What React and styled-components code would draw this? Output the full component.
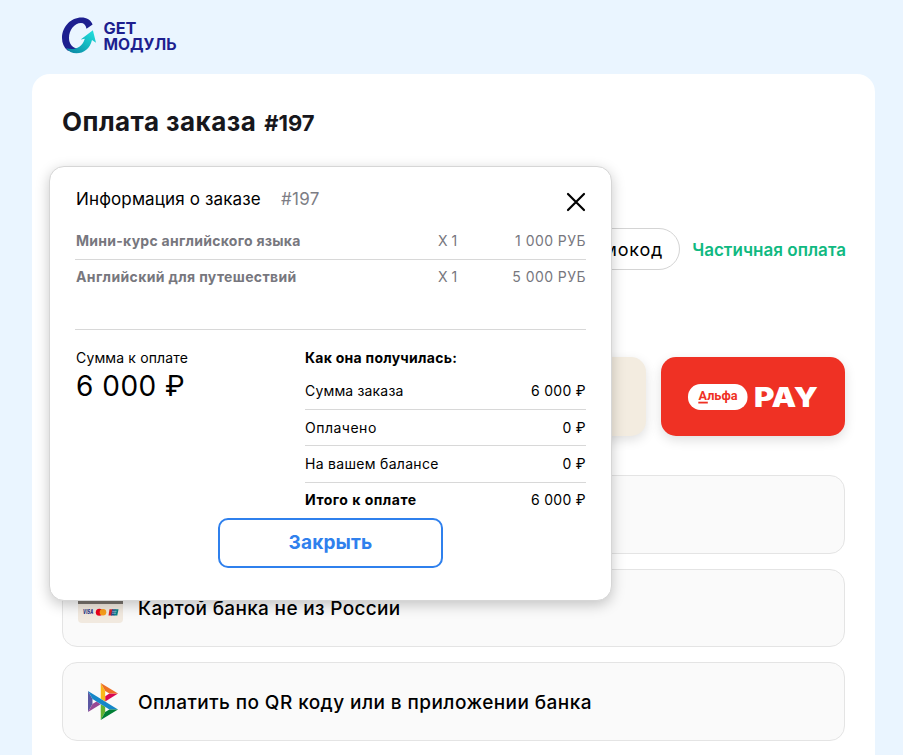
import React from "react";
import styled, { createGlobalStyle } from "styled-components";

const GlobalStyle = createGlobalStyle`
    *, *::before, *::after {
        box-sizing: border-box;
    }

    body {
        margin: 0;
        background: #eaf5ff;
        font-family: Inter, "Open Sans", sans-serif;
        color: #000;
    }
`;

const Page = styled.div`
    position: relative;
    height: 755px;
    padding: 0 28px 0 32px;
    overflow: hidden;
    background: #eaf5ff;
`;

const Header = styled.header`
    display: flex;
    height: 74px;
    padding: 15px 0 0 30px;
`;

const Card = styled.main`
    height: 800px;
    padding: 0 30px;
    border-radius: 18px;
    background: #fff;
`;

const Title = styled.h1`
    display: flex;
    align-items: baseline;
    gap: 8px;
    height: 154px;
    margin: 0;
    padding-top: 31px;
    font-size: 26px;
    line-height: 34px;
    font-weight: 700;
    letter-spacing: 0.45px;
    color: #17171c;
`;

const OrderNumber = styled.span`
    font-size: 22px;
    letter-spacing: 0;
`;

const Actions = styled.div`
    display: flex;
    justify-content: flex-end;
    align-items: center;
    gap: 12px;
    height: 42px;
`;

const PromoButton = styled.button`
    height: 42px;
    padding: 0 16px;
    border: 1px solid #d4d4d4;
    border-radius: 21px;
    background: #fff;
    font: 400 18px Inter, sans-serif;
    letter-spacing: 0.8px;
    color: #000;
`;

const PartialLink = styled.a`
    margin-right: -1px;
    padding-top: 1px;
    font-size: 17px;
    font-weight: 600;
    letter-spacing: 0.03px;
    color: #10b981;
    white-space: nowrap;
`;

const Tiles = styled.div`
    display: grid;
    grid-template-columns: repeat(4, 1fr);
    gap: 15px;
    margin-top: 87px;
`;

const Tile = styled.div`
    display: flex;
    align-items: center;
    justify-content: center;
    height: 79px;
    border-radius: 15px;
    background: ${({ $red }) => ($red ? "#ef3124" : "#f3ece0")};
    box-shadow: 0 4px 12px rgba(0, 0, 0, 0.13);
`;

const Options = styled.div`
    display: flex;
    flex-direction: column;
    gap: 15px;
    margin-top: 39px;
`;

const Option = styled.div`
    display: flex;
    align-items: center;
    gap: 15px;
    height: 78.5px;
    padding: 0 15px;
    border: 1px solid #e4e4e4;
    border-radius: 15px;
    background: #fafafa;
    font-size: 19px;
    font-weight: 500;
    letter-spacing: ${({ $track }) => $track || 0}px;
`;

const OptionIcon = styled.span`
    display: flex;
    justify-content: center;
    flex: 0 0 45px;
`;

const OptionLabel = styled.span`
    padding-top: 2px;
`;

const Modal = styled.section`
    position: absolute;
    left: 49px;
    top: 166px;
    width: 563px;
    height: 435px;
    padding: 0 25px;
    border: 1px solid #d6d6d6;
    border-radius: 15px;
    background: #fff;
    box-shadow: 0 4px 14px rgba(0, 0, 0, 0.22);
`;

const ModalHeader = styled.div`
    display: flex;
    align-items: center;
    height: 56px;
    padding: 8px 0 0 1px;
    font-size: 17px;
    letter-spacing: 0.14px;
`;

const ModalNumber = styled.span`
    margin-left: 20px;
    letter-spacing: 0.3px;
    color: #7d7d85;
`;

const CloseButton = styled.button`
    display: flex;
    margin: 6px 0 0 auto;
    padding: 0;
    border: 0;
    background: none;
`;

const Items = styled.div`
    height: 107px;
    border-bottom: 1px solid #d8d8d8;
`;

const ItemRow = styled.div`
    display: grid;
    grid-template-columns: 1fr 22px 126px;
    align-items: center;
    height: ${({ $last }) => ($last ? 35 : 37)}px;
    padding: 0 0 2px 1px;
    border-bottom: ${({ $last }) => ($last ? "none" : "1px solid #d8d8d8")};
    font-size: 14px;
    white-space: nowrap;
    color: #77777e;
`;

const ItemName = styled.span`
    font-weight: 700;
    letter-spacing: ${({ $track }) => $track || 0}px;
`;

const ItemPrice = styled.span`
    text-align: right;
    letter-spacing: 0.45px;
`;

const Summary = styled.div`
    display: grid;
    grid-template-columns: 230px 1fr;
    height: 188px;
    font-size: 14px;
`;

const Total = styled.div`
    display: flex;
    flex-direction: column;
    padding: 19px 0 0 1px;
    line-height: 18px;
    letter-spacing: 0.15px;
`;

const TotalSum = styled.span`
    font-size: 28px;
    line-height: 38px;
    letter-spacing: 0.5px;
`;

const Breakdown = styled.div`
    display: flex;
    flex-direction: column;
`;

const BreakdownTitle = styled.div`
    height: 43px;
    padding-top: 19px;
    line-height: 18px;
    font-weight: 700;
    letter-spacing: 0.27px;
`;

const BreakdownRow = styled.div`
    display: flex;
    justify-content: space-between;
    align-items: center;
    height: ${({ $bold }) => ($bold ? 34.5 : 36.5)}px;
    border-bottom: ${({ $bold }) => ($bold ? "none" : "1px solid #d8d8d8")};
`;

const BreakdownLabel = styled.span`
    font-weight: ${({ $bold }) => ($bold ? 700 : 400)};
    letter-spacing: ${({ $track }) => $track || 0}px;
`;

const BreakdownValue = styled.span`
    letter-spacing: 0.3px;
`;

const ModalButton = styled.button`
    display: block;
    width: 225px;
    height: 50px;
    margin: 0 auto;
    padding: 0 0 2px;
    border: 2px solid #2f80ed;
    border-radius: 10px;
    background: #fff;
    font: 700 19px Inter, sans-serif;
    letter-spacing: 0.15px;
    color: #2f80ed;
`;

const Logo = () => (
    <svg width="118" height="44" viewBox="0 0 118 44">
        <defs>
            <linearGradient id="arrow" x1="0" y1="1" x2="1" y2="0">
                <stop offset="0" stopColor="#0a7fa0" />
                <stop offset="0.5" stopColor="#12b5bf" />
                <stop offset="1" stopColor="#22e3e0" />
            </linearGradient>
        </defs>
        <path
            d="M30.600 9.500C29 5 24.500 2.500 19.500 2.500C9 2.500 0 11.500 0 23C0 28 2 32.500 5.500 35.500C9 36.500 13 35.500 15.500 33.500C10.500 33 7 29 7 23C7 15 12.500 8 19 8C21.800 8 23.800 10 24.500 13.700Z"
            fill="#1d1f8f"
        />
        <path
            d="M4 33C10 35.500 20 34 22.800 23.700L18.700 24.500L30.900 15.300L34 27.800L30 25C28 33.500 22 38.300 14.500 38.300C10 38.300 6.500 36.500 4 33Z"
            fill="url(#arrow)"
        />
        <g fill="#1d1f8f" fontFamily="Inter, sans-serif" fontWeight="700" fontSize="15.500">
            <text x="41.500" y="19" textLength="33" lengthAdjust="spacingAndGlyphs">GET</text>
            <text x="41.500" y="34.700" textLength="73" lengthAdjust="spacingAndGlyphs">МОДУЛЬ</text>
        </g>
    </svg>
);

const AlfaPay = () => (
    <svg width="136" height="36" viewBox="-2 -4 136 36">
        <rect x="1" y="1" width="59.500" height="26" rx="12.500" fill="#fff" />
        <text x="11.500" y="16.500" fill="#ef3124" fontFamily="Roboto, sans-serif" fontWeight="700" fontSize="13" textLength="39" lengthAdjust="spacingAndGlyphs">Альфа</text>
        <rect x="11.300" y="18.700" width="9.500" height="1.800" fill="#ef3124" />
        <text x="67" y="24" fill="#fff" fontFamily="Inter, sans-serif" fontWeight="900" fontSize="27" textLength="64" lengthAdjust="spacingAndGlyphs">PAY</text>
    </svg>
);

const BankCardIcon = () => (
    <svg width="45" height="30" viewBox="0 0 45 30">
        <rect width="45" height="30" rx="4" fill="#f1e9df" />
        <rect y="4" width="45" height="7" fill="#77726c" />
        <text x="5" y="21.400" fill="#1a2a80" fontFamily="Inter, sans-serif" fontWeight="800" fontStyle="italic" fontSize="5.800" textLength="10.500" lengthAdjust="spacingAndGlyphs">VISA</text>
        <circle cx="21.300" cy="19.300" r="3.500" fill="#eb001b" />
        <circle cx="25" cy="19.300" r="3.300" fill="#f79e1b" />
        <path d="M31.500 16.200H35L33.800 22.400H30.500Z" fill="#d8232a" />
        <path d="M34.300 16.200H37.500L36.300 22.400H33Z" fill="#1f4b8e" />
        <path d="M37 16.200H40.500L39.300 22.400H35.800Z" fill="#0b8088" />
        <path d="M34.200 18.300H38.500M34 20.200H38" stroke="#fff" strokeWidth="0.500" />
    </svg>
);

const SbpIcon = () => (
    <svg width="34" height="37" viewBox="-13 0 110.282 120">
        <path d="M0 26.120L14.532 52.095V67.939L0.017 93.863Z" fill="#5b57a2" />
        <path d="M55.797 42.643L69.414 34.297L97.282 34.271L55.797 59.685Z" fill="#d90751" />
        <path d="M55.720 25.967L55.797 60.357L41.231 51.407V0Z" fill="#fab718" />
        <path d="M97.282 34.271L69.413 34.297L55.720 25.967L41.231 0Z" fill="#ed6f26" />
        <path d="M55.797 94.007V77.322L41.231 68.542L41.239 120Z" fill="#63b22f" />
        <path d="M0.017 93.863L41.350 68.543L27.454 60.017L14.532 67.939Z" fill="#984995" />
        <path d="M69.380 85.737L14.531 52.095L0 26.120L97.223 85.703Z" fill="#1487c9" />
        <path d="M41.240 120L55.796 94.007L69.379 85.737L97.222 85.703Z" fill="#017f36" />
    </svg>
);

const items = [
    { name: "Мини-курс английского языка", price: "1 000 РУБ", track: 0.27 },
    { name: "Английский для путешествий", price: "5 000 РУБ", track: 0.36 },
];

const breakdown = [
    { label: "Сумма заказа", value: "6 000 ₽", track: 0.17 },
    { label: "Оплачено", value: "0 ₽", track: 0.5 },
    { label: "На вашем балансе", value: "0 ₽", track: 0.3 },
    { label: "Итого к оплате", value: "6 000 ₽", track: 0.5, bold: true },
];

const OrderModal = () => (
    <Modal>
        <ModalHeader>
            <span>Информация о заказе</span>
            <ModalNumber>#197</ModalNumber>
            <CloseButton>
                <svg width="20" height="20" viewBox="0 0 20 20">
                    <path d="M2 2L18 18M18 2L2 18" stroke="#000" strokeWidth="2.200" strokeLinecap="round" />
                </svg>
            </CloseButton>
        </ModalHeader>

        <Items>
            {items.map((item, i) => (
                <ItemRow key={item.name} $last={i === items.length - 1}>
                    <ItemName $track={item.track}>{item.name}</ItemName>
                    <span>X 1</span>
                    <ItemPrice>{item.price}</ItemPrice>
                </ItemRow>
            ))}
        </Items>

        <Summary>
            <Total>
                <span>Сумма к оплате</span>
                <TotalSum>6 000 ₽</TotalSum>
            </Total>
            <Breakdown>
                <BreakdownTitle>Как она получилась:</BreakdownTitle>
                {breakdown.map((row) => (
                    <BreakdownRow key={row.label} $bold={row.bold}>
                        <BreakdownLabel $bold={row.bold} $track={row.track}>{row.label}</BreakdownLabel>
                        <BreakdownValue>{row.value}</BreakdownValue>
                    </BreakdownRow>
                ))}
            </Breakdown>
        </Summary>

        <ModalButton>Закрыть</ModalButton>
    </Modal>
);

const App = () => {
    return (
        <>
            <GlobalStyle />
            <Page>
                <Header>
                    <Logo />
                </Header>

                <Card>
                    <Title>
                        Оплата заказа <OrderNumber>#197</OrderNumber>
                    </Title>

                    <Actions>
                        <PromoButton>Промокод</PromoButton>
                        <PartialLink>Частичная оплата</PartialLink>
                    </Actions>

                    <Tiles>
                        <Tile />
                        <Tile />
                        <Tile />
                        <Tile $red>
                            <AlfaPay />
                        </Tile>
                    </Tiles>

                    <Options>
                        <Option />
                        <Option $track={0.33}>
                            <OptionIcon><BankCardIcon /></OptionIcon>
                            <OptionLabel>Картой банка не из России</OptionLabel>
                        </Option>
                        <Option $track={0.43}>
                            <OptionIcon><SbpIcon /></OptionIcon>
                            <OptionLabel>Оплатить по QR коду или в приложении банка</OptionLabel>
                        </Option>
                    </Options>
                </Card>

                <OrderModal />
            </Page>
        </>
    );
};

export default App;
